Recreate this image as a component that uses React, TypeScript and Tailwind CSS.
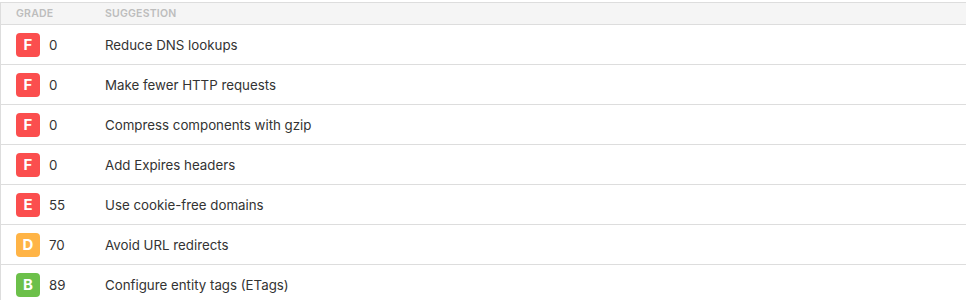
import React from "react";

type Row = { grade: string; score: number; text: string };

const rows: Row[] = [
  { grade: "F", score: 0, text: "Reduce DNS lookups" },
  { grade: "F", score: 0, text: "Make fewer HTTP requests" },
  { grade: "F", score: 0, text: "Compress components with gzip" },
  { grade: "F", score: 0, text: "Add Expires headers" },
  { grade: "E", score: 55, text: "Use cookie-free domains" },
  { grade: "D", score: 70, text: "Avoid URL redirects" },
  { grade: "B", score: 89, text: "Configure entity tags (ETags)" },
];

function Badge({ grade }: { grade: string }) {
  const cls =
    grade === "F" || grade === "E"
      ? "bg-[#fb4e4e]"
      : grade === "D"
      ? "bg-[#ffb446]"
      : "bg-[#6cc04a]";
  return (
    <div
      className={`${cls} w-6 h-6 rounded-[4px] flex items-center justify-center text-white font-bold text-[15px] leading-none`}
    >
      {grade}
    </div>
  );
}

export default function App() {
  return (
    <div className="bg-white w-[966px] h-[300px] pt-[2px] font-['Inter',sans-serif]">
      <div className="border-t border-l border-[#dddddd]">
        <div className="flex items-center h-[22px] bg-[#f5f5f5] border-b border-[#dddddd] text-[10.5px] font-semibold text-[#bdbdbd] uppercase tracking-[0.02em]">
          <div className="w-[104px] pl-[15px]">Grade</div>
          <div>Suggestion</div>
        </div>
        {rows.map((r, i) => (
          <div
            key={i}
            className="flex items-center h-10 border-b border-[#dddddd] text-[13.3px] text-[#333333]"
          >
            <div className="w-[104px] pl-[15px] flex items-center">
              <Badge grade={r.grade} />
              <span className="ml-[9px] pt-[2px]">{r.score}</span>
            </div>
            <div className="pt-[2px]">{r.text}</div>
          </div>
        ))}
      </div>
    </div>
  );
}
